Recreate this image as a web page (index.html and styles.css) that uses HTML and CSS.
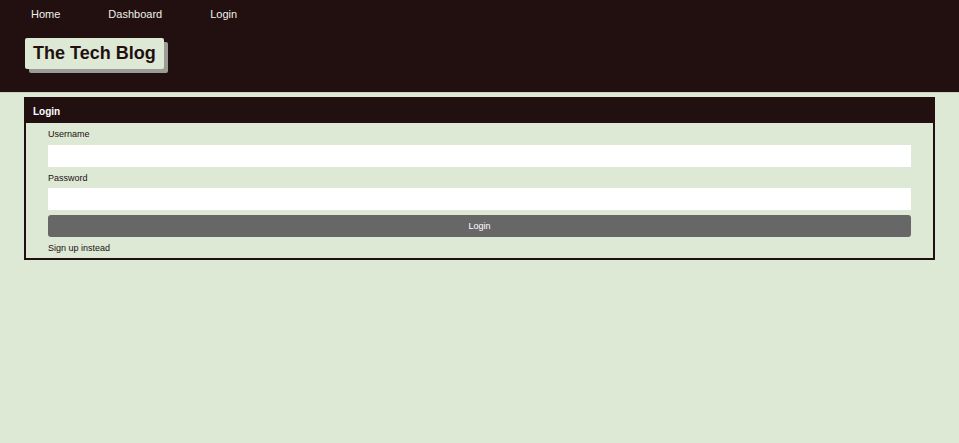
FILE: index.html
```html
<!DOCTYPE html>
<html>
<head>
<meta charset="utf-8">
<title>The Tech Blog</title>
<link rel="stylesheet" href="styles.css">
</head>
<body>
<header class="site-header">
  <nav class="nav">
    <a class="nav-link" href="#">Home</a>
    <a class="nav-link" href="#">Dashboard</a>
    <a class="nav-link" href="#">Login</a>
  </nav>
  <h1 class="brand">The Tech Blog</h1>
</header>
<main class="main">
  <section class="card">
    <div class="card-header">Login</div>
    <form class="card-body">
      <label class="label" for="u">Username</label>
      <input class="input" id="u" type="text">
      <label class="label label-pw" for="p">Password</label>
      <input class="input" id="p" type="password">
      <button class="btn" type="button">Login</button>
      <a class="signup" href="#">Sign up instead</a>
    </form>
  </section>
</main>
</body>
</html>
```
FILE: styles.css
```css
* { box-sizing: border-box; }
html, body { margin: 0; padding: 0; }
body {
  background: #dde8d5;
  font-family: "Liberation Sans", Arial, sans-serif;
  height: 443px;
}
.site-header {
  background: #221010;
  height: 93px;
  border-bottom: 1px solid #c9cdc2;
  padding: 7px 0 0 31px;
}
.nav {
  display: flex;
  gap: 48px;
  line-height: 14px;
}
.nav-link {
  color: #f0f0ea;
  text-decoration: none;
  font-size: 11px;
}
.brand {
  display: inline-block;
  margin: 17px 0 0 -6px;
  background: #dde8d5;
  color: #221010;
  font-size: 18px;
  font-weight: bold;
  line-height: 21px;
  padding: 5px 8px 5px 8px;
  border-radius: 2px;
  box-shadow: 4px 4px 0 #9c9c96;
}
.main {
  padding: 4px 24px 0 24px;
}
.card {
  width: 911px;
}
.card-header {
  background: #221010;
  color: #ffffff;
  font-weight: bold;
  font-size: 10px;
  height: 26px;
  line-height: 30px;
  overflow: hidden;
  padding-left: 9px;
}
.card-body {
  display: flex;
  flex-direction: column;
  border: 2px solid #221010;
  border-top: 0;
  padding: 5px 22px 4px 22px;
}
.label {
  font-size: 9px;
  line-height: 12px;
  color: #221010;
  margin-bottom: 5px;
}
.label-pw {
  margin-top: 5px;
  margin-bottom: 4px;
}
.input {
  height: 22px;
  border: 0;
  background: #ffffff;
  padding: 0;
}
.btn {
  margin-top: 5px;
  height: 22px;
  border: 0;
  border-radius: 3px;
  background: #676767;
  color: #ffffff;
  font-family: "Liberation Sans", Arial, sans-serif;
  font-size: 9px;
  padding: 0;
}
.signup {
  margin-top: 5px;
  font-size: 9px;
  line-height: 12px;
  color: #221010;
  text-decoration: none;
}
```
